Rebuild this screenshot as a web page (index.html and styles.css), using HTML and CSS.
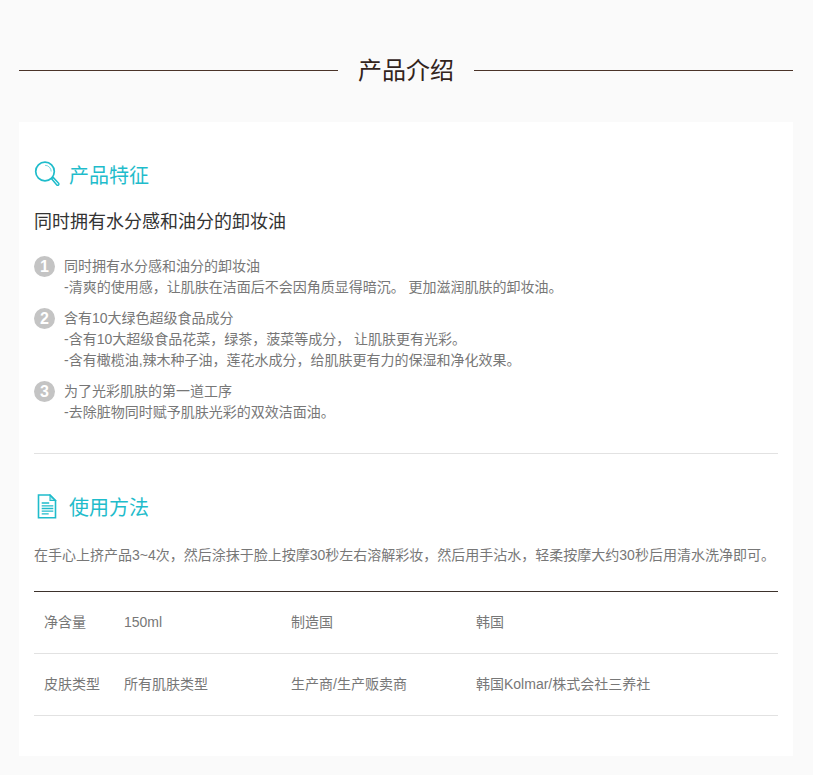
FILE: index.html
```html
<!DOCTYPE html>
<html lang="zh-CN">
<head>
<meta charset="utf-8">
<title>产品介绍</title>
<link rel="stylesheet" href="styles.css">
</head>
<body>
<div class="page">
  <div class="title-row">
    <span class="rule"></span>
    <h1 class="title">产品介绍</h1>
    <span class="rule"></span>
  </div>
  <main class="card">
    <section class="features">
      <h2 class="sec-title">
        <svg class="icon-search" width="26" height="26" viewBox="0 0 26 26" fill="none" stroke="#1fbccb">
          <circle cx="11" cy="10.5" r="9.3" stroke-width="1.7"/>
          <path d="M11 4.3A6.2 6.2 0 0 1 17.2 10.5" stroke-width="1" opacity=".6"/>
          <path d="M17.6 17.8l1.6-1.4 5.4 5.8a1.2 1.2 0 0 1-1.8 1.7z" stroke-width="1.5"/>
        </svg>
        <span>产品特征</span>
      </h2>
      <h3 class="sub">同时拥有水分感和油分的卸妆油</h3>
      <ol class="list">
        <li class="item"><span class="num">1</span><p class="lines">同时拥有水分感和油分的卸妆油<br>-清爽的使用感<span class="cm">，</span>让肌肤在洁面后不会因角质显得暗沉。 更加滋润肌肤的卸妆油。</p></li>
        <li class="item"><span class="num">2</span><p class="lines">含有10大绿色超级食品成分<br>-含有10大超级食品花菜<span class="cm">，</span>绿茶<span class="cm">，</span>菠菜等成分<span class="cm">，</span> 让肌肤更有光彩。<br>-含有橄榄油,辣木种子油<span class="cm">，</span>莲花水成分<span class="cm">，</span>给肌肤更有力的保湿和净化效果。</p></li>
        <li class="item"><span class="num">3</span><p class="lines">为了光彩肌肤的第一道工序<br>-去除脏物同时赋予肌肤光彩的双效洁面油。</p></li>
      </ol>
    </section>
    <section class="usage">
      <h2 class="sec-title">
        <svg class="icon-doc" width="20" height="25" viewBox="0 0 20 25" fill="none" stroke="#1fbccb">
          <path d="M1.5 1h11.5l5.5 5.5V23.700H1.500z" stroke-width="1.600"/>
          <path d="M13 1v5.500h5.500z" fill="#1fbccb" fill-opacity=".35" stroke-width="1.100"/>
          <path d="M4.700 9h7.500M4.700 11.800h11.600M4.700 14.500h11.600M4.700 17.200h11.600M4.700 19.900h7" stroke-width="1.300"/>
        </svg>
        <span>使用方法</span>
      </h2>
      <p class="desc">在手心上挤产品3~4次<span class="cm">，</span>然后涂抹于脸上按摩30秒左右溶解彩妆<span class="cm">，</span>然后用手沾水<span class="cm">，</span>轻柔按摩大约30秒后用清水洗净即可。</p>
      <table class="spec">
        <tr><th>净含量</th><td>150ml</td><th>制造国</th><td>韩国</td></tr>
        <tr><th>皮肤类型</th><td>所有肌肤类型</td><th>生产商/生产贩卖商</th><td>韩国Kolmar/株式会社三养社</td></tr>
      </table>
    </section>
  </main>
</div>
</body>
</html>
```
FILE: styles.css
```css
* { box-sizing: border-box; }
html, body { margin: 0; padding: 0; }
body {
  background: #fafafa;
  color: #777;
  font-family: "Liberation Sans", "Noto Sans CJK SC", sans-serif;
  font-size: 14px;
}
.page { width: 813px; height: 775px; padding: 53px 20px 0 19px; overflow: hidden; }
.title-row { display: flex; align-items: center; height: 35px; gap: 20px; margin-bottom: 34px; }
.rule { flex: 1; height: 1px; background: #4a3328; }
.title { margin: 0; font-size: 24px; font-weight: 400; line-height: 35px; color: #33241c; }
.card { background: #fff; height: 634px; padding: 0 15px; }
.features { padding-top: 37px; height: 332px; border-bottom: 1px solid #e2e2e2; }
.sec-title {
  margin: 0;
  display: flex;
  align-items: center;
  height: 30px;
  font-size: 20px;
  font-weight: 400;
  color: #1fbccb;
}
.icon-search { margin-right: 9px; }
.icon-doc { margin: 0 12px 0 3px; }
.sub { margin: 20px 0 0; font-size: 18px; font-weight: 400; line-height: 26px; color: #333; }
.list { list-style: none; margin: 21px 0 0; padding: 0; }
.item { display: flex; gap: 9px; margin-bottom: 10px; }
.num {
  width: 21px;
  height: 21px;
  border-radius: 50%;
  background: #c4c4c4;
  color: #fff;
  font-size: 16px;
  font-weight: 700;
  line-height: 21px;
  text-align: center;
  flex: none;
}
.lines { margin: 0; line-height: 21px; font-size: 14px; }
.cm { font-family: "Noto Sans CJK TC", sans-serif; line-height: 0; }
.usage { padding-top: 37px; }
.desc { margin: 23px 0 0; line-height: 22px; font-size: 14px; white-space: nowrap; }
.spec {
  margin-top: 25px;
  width: 744px;
  table-layout: fixed;
  border-collapse: collapse;
  border-top: 1px solid #3d322c;
}
.spec th, .spec td {
  height: 62px;
  padding: 20px 10px 0;
  border-bottom: 1px solid #e2e2e2;
  font-weight: 400;
  text-align: left;
  font-size: 14px;
  line-height: 20px;
  vertical-align: baseline;
  color: #777;
}
.spec th:nth-child(1) { width: 80px; }
.spec td:nth-child(2) { width: 167px; }
.spec th:nth-child(3) { width: 185px; }
```
